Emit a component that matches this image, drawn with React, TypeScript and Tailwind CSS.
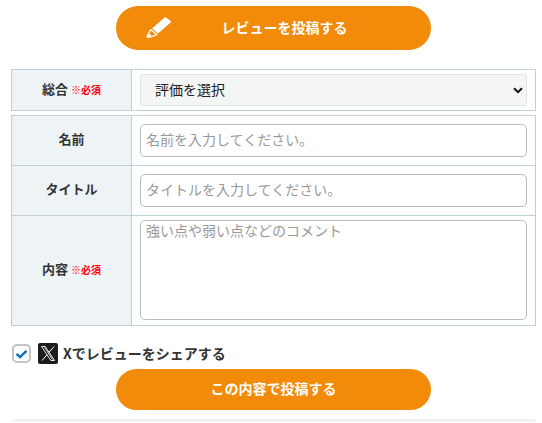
import React from 'react';

const font = 'font-["Noto_Sans_CJK_JP","Noto_Sans",sans-serif]';

const Required = () => (
  <span className="ml-[3px] text-[10px] font-bold text-[#ff0000]">※必須</span>
);

const PencilIcon = () => (
  <svg width="28" height="24" viewBox="0 0 28 24" className="absolute left-[29px] top-[8px]">
    <path d="M7 14.5 19.5 3.5c.5-.4 1-.4 1.400 0l4.800 3.600c.4.400.4.900 0 1.300L13 19.500z" fill="#fff" />
    <path d="M5.800 15.800 11.800 20.500 4 23.500c-1.200.3-2.200-.6-1.800-1.800z" fill="none" stroke="#fff" strokeWidth="1.300" />
    <path d="M2.500 21 5 19.500l1.500 2.500L3 23.300z" fill="#fff" />
  </svg>
);

const XLogo = () => (
  <svg width="20" height="21" viewBox="0 0 20 21" className="shrink-0">
    <rect width="20" height="21" rx="2" fill="#1c1c1c" />
    <path d="M3.500 3.500h3.700l9.300 14h-3.700z" fill="none" stroke="#fff" strokeWidth="0.900" />
    <path d="M16 3.500 11 9.400M9 11.800 4 17.500" stroke="#fff" strokeWidth="1" />
    <path d="M6.500 4.300 14.500 16.700" stroke="#fff" strokeWidth="0.800" />
  </svg>
);

const labelCell = 'w-[120px] border border-[#bfd0d8] bg-[#eef3f6] p-0 pb-[4px] text-center align-middle text-[13px] font-bold text-[#333]';
const inputCell = 'border border-[#bfd0d8] bg-white p-0 align-middle';
const inputClass = 'block h-[33px] w-[387px] rounded-[5px] border border-[#bcbcbc] bg-white px-[5px] pb-[3px] text-[14px] text-[#333] placeholder:text-[#999] outline-none';

export default function App() {
  return (
    <div className={`${font} h-[423px] w-[542px] overflow-hidden bg-white`}>
      <div className="flex justify-center pt-[6px]">
        <button className="relative ml-[5px] flex h-[44px] w-[315px] items-center justify-center rounded-full bg-[#f28a0a] pb-[2px] pl-[22px] text-[14px] font-bold text-white">
          <PencilIcon />
          レビューを投稿する
        </button>
      </div>

      <table className="ml-[11px] mt-[19px] w-[525px] table-fixed border-collapse">
        <tbody>
          <tr className="h-[41px]">
            <td className={`${labelCell} !pb-[2px]`}>
              総合<Required />
            </td>
            <td className={inputCell}>
              <div className="relative mx-[8px]">
                <select className="block h-[32px] w-[387px] appearance-none rounded-[3px] border border-[#dfe5e5] bg-[#f4f6f6] pb-[1px] pl-[14px] text-[14px] text-[#222] outline-none">
                  <option>評価を選択</option>
                </select>
                <svg width="10" height="7" viewBox="0 0 10 7" className="pointer-events-none absolute right-[4px] top-[13px]">
                  <path d="M1 1.200 5 5.200 9 1.200" fill="none" stroke="#111" strokeWidth="2" />
                </svg>
              </div>
            </td>
          </tr>
        </tbody>
      </table>

      <table className="ml-[11px] mt-[4px] w-[525px] table-fixed border-collapse">
        <tbody>
          <tr className="h-[50px]">
            <td className={labelCell}>名前</td>
            <td className={inputCell}>
              <input className={`${inputClass} mx-[8px]`} placeholder="名前を入力してください。" />
            </td>
          </tr>
          <tr className="h-[50px]">
            <td className={labelCell}>タイトル</td>
            <td className={inputCell}>
              <input className={`${inputClass} mx-[8px]`} placeholder="タイトルを入力してください。" />
            </td>
          </tr>
          <tr className="h-[110px]">
            <td className={labelCell}>
              内容<Required />
            </td>
            <td className={`${inputCell} pb-[2px]`}>
              <textarea
                className="mx-[8px] block h-[100px] w-[387px] resize-none rounded-[5px] border border-[#bcbcbc] bg-white px-[5px] py-0 text-[14px] leading-[18px] text-[#333] outline-none placeholder:text-[#999]"
                placeholder="強い点や弱い点などのコメント"
              />
            </td>
          </tr>
        </tbody>
      </table>

      <div className="ml-[12px] mt-[17px] flex h-[21px] items-center">
        <span className="flex h-[19px] w-[19px] items-center justify-center rounded-[5px] border-2 border-[#c4c4c4] bg-white">
          <svg width="13" height="10" viewBox="0 0 13 10">
            <path d="M1.500 4.800 5 8 11.500 1.800" fill="none" stroke="#0a6ebd" strokeWidth="2.400" />
          </svg>
        </span>
        <span className="ml-[7px]"><XLogo /></span>
        <span className="ml-[5px] pb-[1px] text-[14px] font-bold text-[#333]">Xでレビューをシェアする</span>
      </div>

      <div className="mt-[5px] flex justify-center">
        <button className="ml-[5px] h-[41px] w-[315px] rounded-full bg-[#f28a0a] pb-[2px] text-[14px] font-bold text-white">
          この内容で投稿する
        </button>
      </div>

      <div className="ml-[12px] mt-[9px] h-[3px] w-[524px] rounded-t-[3px] bg-[#f0f3f3]" />
    </div>
  );
}
